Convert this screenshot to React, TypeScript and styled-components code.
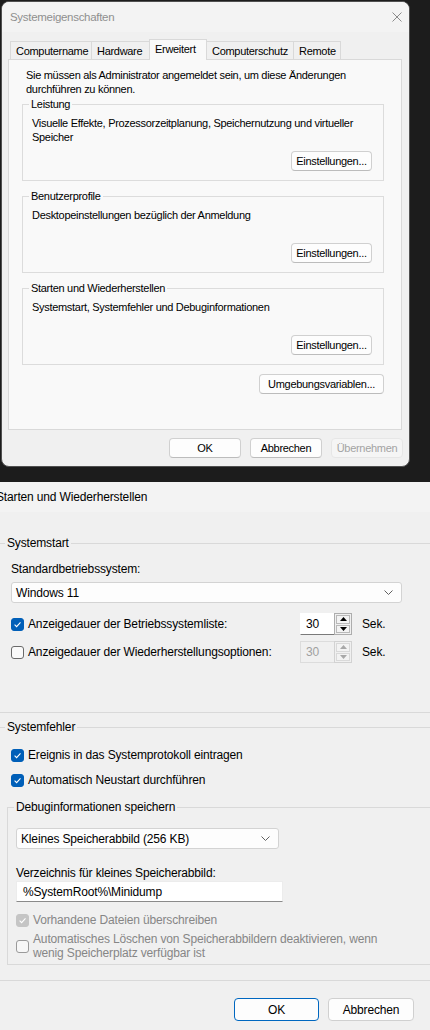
import React from 'react';
import styled, { createGlobalStyle, css } from 'styled-components';

const GlobalStyle = createGlobalStyle`
  html, body {
    margin: 0;
    padding: 0;
    background: #1c1c1c;
  }
  body {
    font-family: "Liberation Sans", Arial, sans-serif;
  }
  * {
    box-sizing: border-box;
  }
`;

const Screen = styled.div`
  width: 430px;
  height: 1030px;
  overflow: hidden;
  background: #1c1c1c;
  display: flex;
  flex-direction: column;
`;

/* ---------- Systemeigenschaften (top window) ---------- */

const Backdrop = styled.div`
  flex: none;
  height: 482px;
  padding: 1px 0 0 1px;
`;

const Window = styled.div`
  width: 409px;
  height: 466px;
  background: #f0f0f0;
  border: 1px solid #505050;
  border-radius: 8px;
  overflow: hidden;
  display: flex;
  flex-direction: column;
  font-size: 11px;
  letter-spacing: -0.3px;
  color: #000;
`;

const TitleBar = styled.div`
  flex: none;
  height: 30px;
  padding: 0 7px 0 8px;
  display: flex;
  align-items: center;
  justify-content: space-between;
  background: #f3f3f3;
  color: #8f8f8f;
  font-size: 11.5px;
`;

const CloseGlyph = styled.svg`
  display: block;
`;

const TabStrip = styled.div`
  flex: none;
  position: relative;
  z-index: 1;
  height: 21px;
  margin: 7px 0 -1px;
  padding-left: 8px;
  display: flex;
  align-items: flex-start;
`;

const Tab = styled.div<{ $active?: boolean; $w: number }>`
  width: ${(p) => p.$w}px;
  height: 18px;
  margin-top: 2px;
  margin-left: -1px;
  padding-left: 5px;
  display: flex;
  align-items: center;
  white-space: nowrap;
  border: 1px solid #d9d9d9;
  border-bottom: none;
  background: #f0f0f0;
  &:first-child {
    margin-left: 0;
  }
  ${(p) =>
    p.$active &&
    css`
      height: 21px;
      margin-top: 0;
      padding-bottom: 3px;
      background: #f9f9f9;
    `}
`;

const TabPanel = styled.div`
  flex: none;
  width: 394px;
  height: 371px;
  margin-left: 6px;
  padding: 8px 0 0 13px;
  background: #f9f9f9;
  border: 1px solid #d9d9d9;
`;

const Intro = styled.div`
  width: 360px;
  padding-left: 4px;
  line-height: 14px;
`;

const Group = styled.fieldset`
  width: 362px;
  margin: 1px 0 8px;
  padding: 0 11px 9px 9px;
  min-width: 0;
  border: 1px solid #dcdcdc;
`;

const GroupLegend = styled.legend`
  margin-left: -3px;
  padding: 0 2px;
  line-height: 14px;
`;

const GroupBody = styled.div`
  height: 60px;
  padding-top: 5px;
  display: flex;
  flex-direction: column;
  align-items: flex-start;
  line-height: 14px;
`;

const ButtonRow = styled.div`
  display: flex;
  justify-content: flex-end;
  align-self: stretch;
  margin-top: auto;
`;

const EnvRow = styled.div`
  width: 362px;
  margin-top: 9px;
  display: flex;
  justify-content: flex-end;
`;

const Footer = styled.div`
  flex: none;
  padding: 8px 6px 0 0;
  display: flex;
  justify-content: flex-end;
  gap: 9px;
`;

const Button = styled.button<{ $w: number; $disabled?: boolean }>`
  width: ${(p) => p.$w}px;
  height: 20px;
  padding: 0;
  font: inherit;
  letter-spacing: inherit;
  color: #000;
  background: #fdfdfd;
  border: 1px solid #d0d0d0;
  border-bottom-color: #bcbcbc;
  border-radius: 4px;
  ${(p) =>
    p.$disabled &&
    css`
      color: #a3a3a3;
      background: #f5f5f5;
      border-color: #e6e6e6;
    `}
`;

/* ---------- Starten und Wiederherstellen (lower window) ---------- */

const SubWindow = styled.div`
  flex: 1;
  background: #f0f0f0;
  font-size: 12px;
  letter-spacing: -0.15px;
  line-height: 16px;
  color: #000;
`;

const SubTitle = styled.div`
  height: 30px;
  display: flex;
  align-items: center;
  background: #f3f3f3;
  & > span {
    margin-left: -4px;
  }
`;

const SubBody = styled.div`
  padding-top: 23px;
`;

const SubGroup = styled.fieldset<{ $left: number; $top?: number; $pt: number; $pb: number; $pl: number }>`
  width: 470px;
  margin: ${(p) => p.$top ?? 0}px 0 0 ${(p) => p.$left}px;
  padding: ${(p) => p.$pt}px 0 ${(p) => p.$pb}px ${(p) => p.$pl}px;
  min-width: 0;
  border: 1px solid #d9d9d9;
`;

const SubLegend = styled.legend<{ $shift: number }>`
  margin-left: ${(p) => p.$shift}px;
  padding: 0 2px;
  line-height: 16px;
`;

const Label = styled.div<{ $mt?: number }>`
  margin-top: ${(p) => p.$mt ?? 0}px;
`;

const Select = styled.div<{ $w: number; $mt?: number }>`
  width: ${(p) => p.$w}px;
  height: 21px;
  margin-top: ${(p) => p.$mt ?? 0}px;
  padding: 0 8px 0 4px;
  display: flex;
  align-items: center;
  justify-content: space-between;
  background: #fdfdfd;
  border: 1px solid #d3d3d3;
  border-radius: 3px;
`;

const TextInput = styled.div<{ $w: number }>`
  width: ${(p) => p.$w}px;
  height: 21px;
  padding-left: 6px;
  display: flex;
  align-items: center;
  background: #fff;
  border: 1px solid #ececec;
  border-bottom-color: #8a8a8a;
`;

const TimeRow = styled.div<{ $mt: number }>`
  height: 22px;
  margin-top: ${(p) => p.$mt}px;
  display: flex;
  align-items: center;
`;

const CheckRow = styled.div<{ $mt?: number; $w?: number; $muted?: boolean }>`
  ${(p) => (p.$w ? `width: ${p.$w}px; flex: none;` : '')}
  margin-top: ${(p) => p.$mt ?? 0}px;
  display: flex;
  align-items: center;
  gap: 4px;
  color: ${(p) => (p.$muted ? '#868686' : '#000')};
`;

const WrapLabel = styled.span`
  line-height: 14px;
  width: 352px;
`;

const CheckBox = styled.span<{ $checked?: boolean; $disabled?: boolean }>`
  flex: none;
  width: 13px;
  height: 13px;
  border-radius: 3px;
  display: flex;
  align-items: center;
  justify-content: center;
  background: #fafafa;
  border: 1px solid #6a6a6a;
  ${(p) =>
    p.$checked &&
    css`
      background: #005fb8;
      border-color: #005fb8;
    `}
  ${(p) =>
    p.$disabled &&
    css`
      border-color: ${p.$checked ? '#c5c5c5' : '#9a9a9a'};
      background: ${p.$checked ? '#c5c5c5' : '#f7f7f7'};
    `}
`;

const SpinBox = styled.div`
  flex: none;
  width: 52px;
  height: 22px;
  display: flex;
`;

const SpinValue = styled.div<{ $disabled?: boolean }>`
  flex: 1;
  padding-left: 5px;
  display: flex;
  align-items: center;
  background: ${(p) => (p.$disabled ? '#f0f0f0' : '#fff')};
  color: ${(p) => (p.$disabled ? '#a0a0a0' : '#000')};
  border: 1px solid ${(p) => (p.$disabled ? '#dcdcdc' : '#fff')};
  border-bottom-color: ${(p) => (p.$disabled ? '#dcdcdc' : '#7a7a7a')};
  border-right: none;
`;

const SpinButtons = styled.div<{ $disabled?: boolean }>`
  width: 18px;
  padding: 1px;
  display: flex;
  flex-direction: column;
  gap: 1px;
  border: 1px solid ${(p) => (p.$disabled ? '#d2d2d2' : '#adadad')};
`;

const SpinButton = styled.div<{ $disabled?: boolean }>`
  flex: 1;
  display: flex;
  align-items: center;
  justify-content: center;
  background: #f3f3f3;
  border: 1px solid ${(p) => (p.$disabled ? '#d9d9d9' : '#b9b9b9')};
  color: ${(p) => (p.$disabled ? '#a8a8a8' : '#000')};
`;

const Unit = styled.span`
  padding-left: 10px;
`;

const SubFooter = styled.div`
  padding: 17px 16px 0 0;
  display: flex;
  justify-content: flex-end;
  gap: 9px;
`;

const DialogButton = styled.button<{ $w: number; $default?: boolean }>`
  width: ${(p) => p.$w}px;
  height: 23px;
  padding: 0;
  font: inherit;
  letter-spacing: inherit;
  color: #000;
  background: #fdfdfd;
  border: 1px solid ${(p) => (p.$default ? '#0067c0' : '#d0d0d0')};
  border-radius: 4px;
`;

const Chevron = () => (
  <svg width="9" height="5" viewBox="0 0 9 5">
    <path d="M0.5 0.5 L4.5 4.5 L8.5 0.5" fill="none" stroke="#606060" strokeWidth="1" />
  </svg>
);

const Check = ({ checked, disabled }: { checked?: boolean; disabled?: boolean }) => (
  <CheckBox $checked={checked} $disabled={disabled}>
    {checked && (
      <svg width="9" height="9" viewBox="0 0 9 9">
        <path d="M1.6 4.7 L3.6 6.6 L7.5 2.4" fill="none" stroke="#fff" strokeWidth="1.1" />
      </svg>
    )}
  </CheckBox>
);

const Arrow = ({ up }: { up?: boolean }) => (
  <svg width="7" height="4" viewBox="0 0 7 4">
    <path d={up ? 'M0 4 L3.5 0 L7 4 Z' : 'M0 0 L7 0 L3.5 4 Z'} fill="currentColor" />
  </svg>
);

const Spinner = ({ value, disabled }: { value: string; disabled?: boolean }) => (
  <SpinBox>
    <SpinValue $disabled={disabled}>{value}</SpinValue>
    <SpinButtons $disabled={disabled}>
      <SpinButton $disabled={disabled}>
        <Arrow up />
      </SpinButton>
      <SpinButton $disabled={disabled}>
        <Arrow />
      </SpinButton>
    </SpinButtons>
  </SpinBox>
);

const tabs = [
  { name: 'Computername', w: 82 },
  { name: 'Hardware', w: 59 },
  { name: 'Erweitert', w: 58, active: true },
  { name: 'Computerschutz', w: 88 },
  { name: 'Remote', w: 48 },
];

const groups = [
  {
    title: 'Leistung',
    text: 'Visuelle Effekte, Prozessorzeitplanung, Speichernutzung und virtueller Speicher',
  },
  { title: 'Benutzerprofile', text: 'Desktopeinstellungen bezüglich der Anmeldung' },
  {
    title: 'Starten und Wiederherstellen',
    text: 'Systemstart, Systemfehler und Debuginformationen',
  },
];

export default function App() {
  return (
    <Screen>
      <GlobalStyle />
      <Backdrop>
        <Window>
          <TitleBar>
            <span>Systemeigenschaften</span>
            <CloseGlyph width="10" height="10" viewBox="0 0 10 10">
              <path d="M0.5 0.5 L9.5 9.5 M9.5 0.5 L0.5 9.5" stroke="#8a8a8a" strokeWidth="1" />
            </CloseGlyph>
          </TitleBar>
          <TabStrip>
            {tabs.map((t) => (
              <Tab key={t.name} $w={t.w} $active={t.active}>
                {t.name}
              </Tab>
            ))}
          </TabStrip>
          <TabPanel>
            <Intro>
              Sie müssen als Administrator angemeldet sein, um diese Änderungen durchführen zu
              können.
            </Intro>
            {groups.map((g) => (
              <Group key={g.title}>
                <GroupLegend>{g.title}</GroupLegend>
                <GroupBody>
                  <div>{g.text}</div>
                  <ButtonRow>
                    <Button $w={81}>Einstellungen...</Button>
                  </ButtonRow>
                </GroupBody>
              </Group>
            ))}
            <EnvRow>
              <Button $w={125}>Umgebungsvariablen...</Button>
            </EnvRow>
          </TabPanel>
          <Footer>
            <Button $w={72}>OK</Button>
            <Button $w={72}>Abbrechen</Button>
            <Button $w={72} $disabled>
              Übernehmen
            </Button>
          </Footer>
        </Window>
      </Backdrop>

      <SubWindow>
        <SubTitle>
          <span>Starten und Wiederherstellen</span>
        </SubTitle>
        <SubBody>
          <SubGroup $left={-2} $pt={10} $pb={49} $pl={12}>
            <SubLegend $shift={-6}>Systemstart</SubLegend>
            <Label>Standardbetriebssystem:</Label>
            <Select $w={391} $mt={5}>
              <span>Windows 11</span>
              <Chevron />
            </Select>
            <TimeRow $mt={10}>
              <CheckRow $w={289}>
                <Check checked />
                <span>Anzeigedauer der Betriebssystemliste:</span>
              </CheckRow>
              <Spinner value="30" />
              <Unit>Sek.</Unit>
            </TimeRow>
            <TimeRow $mt={6}>
              <CheckRow $w={289}>
                <Check />
                <span>Anzeigedauer der Wiederherstellungsoptionen:</span>
              </CheckRow>
              <Spinner value="30" disabled />
              <Unit>Sek.</Unit>
            </TimeRow>
          </SubGroup>

          <SubGroup $left={-2} $top={6} $pt={12} $pb={15} $pl={12}>
            <SubLegend $shift={-6}>Systemfehler</SubLegend>
            <CheckRow>
              <Check checked />
              <span>Ereignis in das Systemprotokoll eintragen</span>
            </CheckRow>
            <CheckRow $mt={9}>
              <Check checked />
              <span>Automatisch Neustart durchführen</span>
            </CheckRow>
            <SubGroup $left={-4} $top={11} $pt={13} $pb={4} $pl={8}>
              <SubLegend $shift={-2}>Debuginformationen speichern</SubLegend>
              <Select $w={263}>
                <span>Kleines Speicherabbild (256 KB)</span>
                <Chevron />
              </Select>
              <Label $mt={16}>Verzeichnis für kleines Speicherabbild:</Label>
              <TextInput $w={267}>%SystemRoot%\Minidump</TextInput>
              <CheckRow $mt={10} $muted>
                <Check checked disabled />
                <span>Vorhandene Dateien überschreiben</span>
              </CheckRow>
              <CheckRow $mt={4} $muted>
                <Check disabled />
                <WrapLabel>
                  Automatisches Löschen von Speicherabbildern deaktivieren, wenn wenig
                  Speicherplatz verfügbar ist
                </WrapLabel>
              </CheckRow>
            </SubGroup>
          </SubGroup>

          <SubFooter>
            <DialogButton $w={85} $default>
              OK
            </DialogButton>
            <DialogButton $w={86}>Abbrechen</DialogButton>
          </SubFooter>
        </SubBody>
      </SubWindow>
    </Screen>
  );
}
